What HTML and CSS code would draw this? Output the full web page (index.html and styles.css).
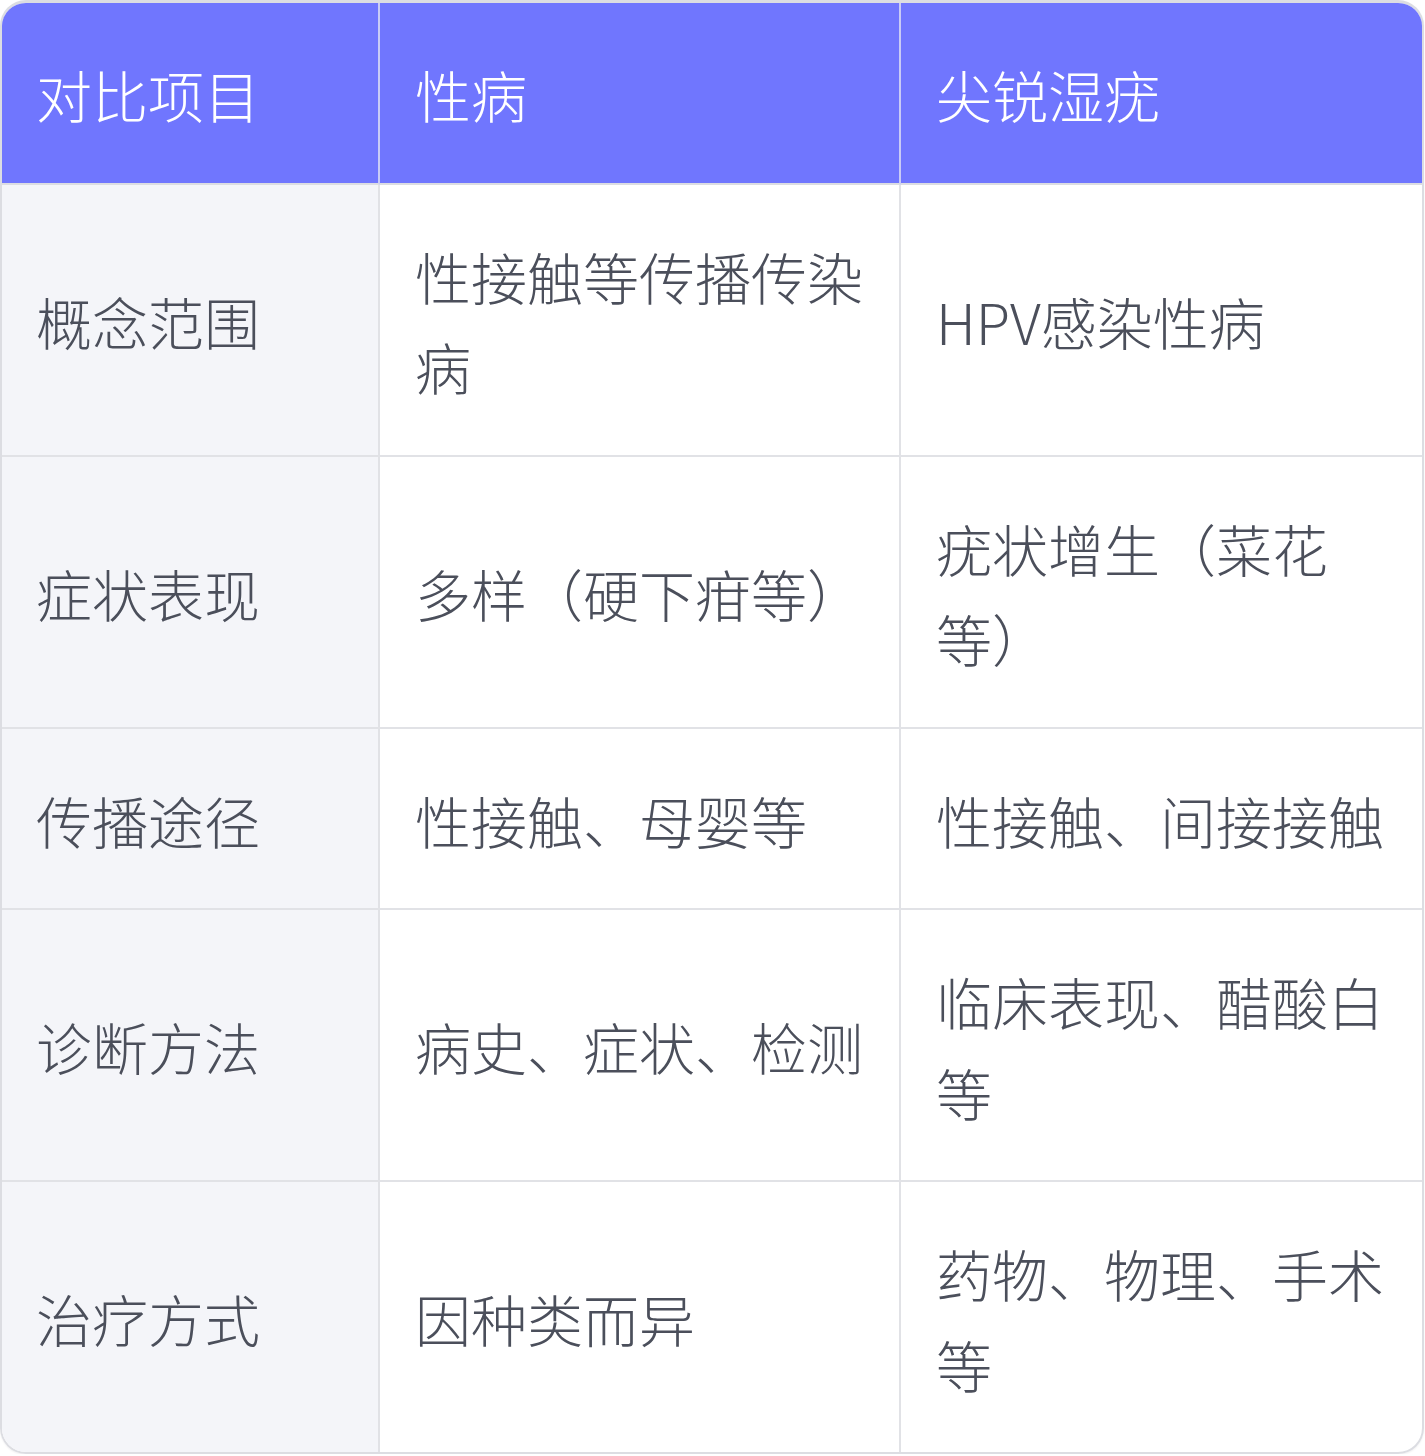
FILE: index.html
```html
<!DOCTYPE html>
<html lang="zh-CN">
<head>
<meta charset="utf-8">
<link rel="stylesheet" href="styles.css">
</head>
<body>
<div class="wrap">
<table class="cmp">
<thead>
<tr><th class="c1">对比项目</th><th class="c2">性病</th><th class="c3">尖锐湿疣</th></tr>
</thead>
<tbody>
<tr><td class="c1">概念范围</td><td>性接触等传播传染病</td><td>HPV感染性病</td></tr>
<tr><td class="c1">症状表现</td><td>多样（硬下疳等）</td><td>疣状增生（菜花等）</td></tr>
<tr><td class="c1">传播途径</td><td>性接触、母婴等</td><td>性接触、间接接触</td></tr>
<tr><td class="c1">诊断方法</td><td>病史、症状、检测</td><td>临床表现、醋酸白等</td></tr>
<tr><td class="c1">治疗方式</td><td>因种类而异</td><td>药物、物理、手术等</td></tr>
</tbody>
</table>
</div>
</body>
</html>
```
FILE: styles.css
```css
html, body { margin: 0; padding: 0; background: #ffffff; }
.wrap { width: 1424px; padding: 0; }
.cmp {
  width: 1424px;
  border-collapse: separate;
  border-spacing: 0;
  border: 2px solid #dcdde2;
  border-top-width: 3px;
  border-radius: 26px;
  overflow: hidden;
  table-layout: fixed;
  font-family: "Noto Sans CJK SC", "Noto Sans", sans-serif;
  font-weight: 300;
  font-size: 56px;
  line-height: 90.5px;
  color: #4b4f5b;
  box-shadow: 0 1px 2px rgba(0,0,0,0.06);
}
.cmp th, .cmp td {
  padding: 46px 33px 43px 35px;
  text-align: left;
  vertical-align: middle;
  border-right: 2px solid #e1e2e6;
  border-bottom: 2px solid #e1e2e6;
  word-break: break-all;
}
.cmp th:last-child, .cmp td:last-child { border-right: none; }
.cmp tbody tr:last-child td { border-bottom: none; }
.cmp th {
  background: #7076fe;
  color: #ffffff;
  font-weight: 300;
  border-right-color: #c9cbf6;
  border-bottom-color: #dcdde2;
}
.cmp th.c1 { width: 309px; }
.cmp .c1 { padding-left: 34px; }
.cmp td.c1 { background: #f4f5f9; }
```
